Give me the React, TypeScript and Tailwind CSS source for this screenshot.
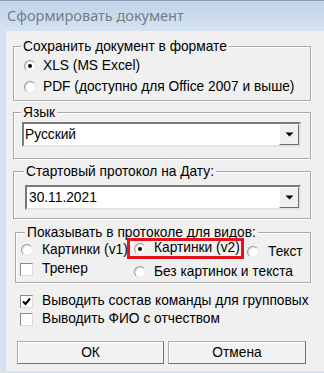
import type { ReactNode } from "react";

const Radio = ({ checked = false }: { checked?: boolean }) => (
  <span className="relative w-[12px] h-[12px] shrink-0 rounded-full bg-white border border-t-[#9a9a9a] border-l-[#9a9a9a] border-r-[#e8e8e8] border-b-[#e8e8e8] shadow-[inset_1px_1px_1px_rgba(0,0,0,0.12)] flex items-center justify-center">
    {checked && <span className="w-[4px] h-[4px] rounded-full bg-black" />}
  </span>
);

const Check = ({ checked = false }: { checked?: boolean }) => (
  <span className="w-[13px] h-[13px] shrink-0 bg-white border border-t-[#8a8a8a] border-l-[#8a8a8a] border-r-[#dcdcdc] border-b-[#dcdcdc] flex items-center justify-center">
    {checked && (
      <svg width="9" height="9" viewBox="0 0 9 9">
        <path d="M1 4.5 L3.5 7 L8 1.5" fill="none" stroke="#000" strokeWidth="2" />
      </svg>
    )}
  </span>
);

const GroupBox = ({
  title,
  titleLeft,
  className,
  children,
}: {
  title: string;
  titleLeft: string;
  className: string;
  children?: ReactNode;
}) => (
  <div
    className={`relative border border-[#a9a9a9] shadow-[inset_1px_1px_0_#fff,1px_1px_0_#fff] ${className}`}
  >
    <span className={`absolute top-[-8px] ${titleLeft} px-[2px] bg-[#f0f0f0] leading-[15px] whitespace-nowrap`}>
      {title}
    </span>
    {children}
  </div>
);

const Combo = ({ value, className }: { value: string; className: string }) => (
  <div
    className={`h-[25px] flex bg-white border-2 border-t-[#7a7a7a] border-l-[#7a7a7a] border-r-[#e3e3e3] border-b-[#e3e3e3] ${className}`}
  >
    <span className="flex-1 leading-[21px] whitespace-nowrap">{value}</span>
    <span className="w-[20px] h-[21px] bg-[#f0f0f0] border border-t-white border-l-white border-r-[#6e6e6e] border-b-[#6e6e6e] flex items-center justify-center">
      <svg width="9" height="5" viewBox="0 0 9 5">
        <path d="M0.5 0.5 L8.5 0.5 L4.5 4.5 Z" fill="#000" />
      </svg>
    </span>
  </div>
);

const Button = ({ label, className }: { label: string; className: string }) => (
  <button
    className={`h-[23px] bg-[#f2f2f2] border border-[#adadad] border-r-[#707070] border-b-[#707070] shadow-[inset_1px_1px_0_#fff] text-[13.75px] leading-[20px] ${className}`}
  >
    {label}
  </button>
);

export default function App() {
  return (
    <div className="w-[324px] h-[373px] overflow-hidden flex flex-col bg-[#d3e1f0] font-['Liberation_Sans',Arial,sans-serif] text-[13.75px] text-black">
      {/* Заголовок окна */}
      <div className="h-[31px] shrink-0 border-t border-[#8c9db1] bg-gradient-to-b from-[#c2d3e7] to-[#d5e3f1] flex items-center pl-[7px]">
        <span className="font-['Noto_Sans',sans-serif] text-[14.5px] text-[#737d88]">
          Сформировать документ
        </span>
      </div>

      <div className="flex-1 flex">
        <div className="w-[6px] shrink-0" />
        <div className="flex-1 bg-[#f0f0f0] flex flex-col mb-[2px]">
          {/* Формат */}
          <GroupBox
            title="Сохранить документ в формате"
            titleLeft="left-[7px]"
            className="mt-[15px] ml-[7px] w-[298px] h-[55px] pl-[10px] pt-[11px]"
          >
            <div className="h-[16px] flex items-center gap-[7px]">
              <Radio checked />
              <span>XLS (MS Excel)</span>
            </div>
            <div className="h-[16px] mt-[5px] flex items-center gap-[7px]">
              <Radio />
              <span className="whitespace-nowrap">PDF (доступно для Office 2007 и выше)</span>
            </div>
          </GroupBox>

          {/* Язык */}
          <GroupBox
            title="Язык"
            titleLeft="left-[7px]"
            className="mt-[11px] ml-[7px] w-[298px] h-[47px] pt-[9px]"
          >
            <Combo value="Русский" className="ml-[8px] w-[279px] pl-[1px]" />
          </GroupBox>

          {/* Дата */}
          <GroupBox
            title="Стартовый протокол на Дату:"
            titleLeft="left-[10px]"
            className="mt-[12px] ml-[7px] w-[298px] h-[48px] pt-[13px]"
          >
            <Combo value="30.11.2021" className="ml-[11px] w-[276px] pl-[2px]" />
          </GroupBox>

          {/* Виды */}
          <GroupBox
            title="Показывать в протоколе для видов:"
            titleLeft="left-[9px]"
            className="mt-[13px] ml-[9px] w-[296px] h-[51px] pt-[5px]"
          >
            <div className="flex items-start">
              <div className="w-[111px] h-[16px] mt-[4px] pl-[5px] flex items-center gap-[9px] whitespace-nowrap">
                <Radio />
                <span>Картинки (v1)</span>
              </div>
              <div className="relative w-[117px] h-[21px] border-[3px] border-[#e3131b] pl-[4px] flex items-center gap-[8px] whitespace-nowrap">
                <Radio checked />
                <span>Картинки (v2)</span>
              </div>
              <div className="h-[16px] mt-[6px] ml-[3px] flex items-center gap-[9px]">
                <Radio />
                <span>Текст</span>
              </div>
            </div>
            <div className="flex items-start">
              <div className="w-[118px] h-[16px] mt-[1px] pl-[4px] flex items-center gap-[9px]">
                <Check />
                <span>Тренер</span>
              </div>
              <div className="h-[16px] mt-[4px] flex items-center gap-[8px] whitespace-nowrap">
                <Radio />
                <span>Без картинок и текста</span>
              </div>
            </div>
          </GroupBox>

          {/* Флажки */}
          <div className="mt-[10px] ml-[14px] h-[16px] flex items-center gap-[9px] whitespace-nowrap">
            <Check checked />
            <span>Выводить состав команды для групповых</span>
          </div>
          <div className="mt-[2px] ml-[14px] h-[16px] flex items-center gap-[9px]">
            <Check />
            <span>Выводить ФИО с отчеством</span>
          </div>

          {/* Кнопки */}
          <div className="mt-[14px] ml-[11px] flex gap-[4px]">
            <Button label="ОК" className="w-[147px]" />
            <Button label="Отмена" className="w-[138px]" />
          </div>
        </div>
      </div>
    </div>
  );
}
